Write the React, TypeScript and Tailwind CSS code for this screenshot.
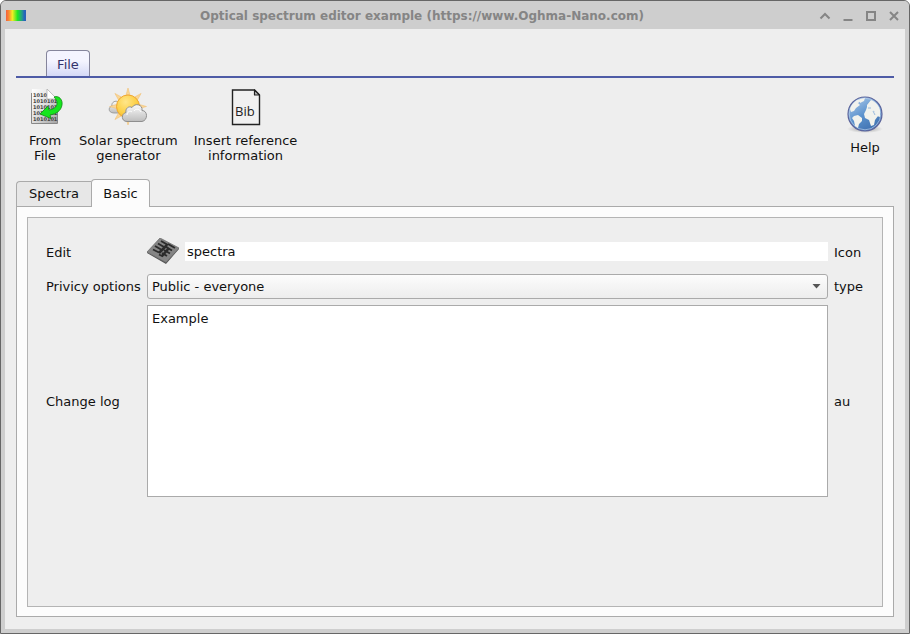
import React from "react";

function SpectrumLogo() {
  return (
    <svg width="20" height="11" viewBox="0 0 20 11" aria-hidden="true">
      <defs>
        <linearGradient id="rainbow" x1="0" x2="1" y1="0" y2="0">
          <stop offset="0" stopColor="#f4603c" />
          <stop offset="0.15" stopColor="#f98c35" />
          <stop offset="0.32" stopColor="#f2ee22" />
          <stop offset="0.58" stopColor="#1fe626" />
          <stop offset="0.8" stopColor="#259a8a" />
          <stop offset="0.92" stopColor="#2565bd" />
          <stop offset="1" stopColor="#2b62b5" />
        </linearGradient>
      </defs>
      <rect width="20" height="11" fill="url(#rainbow)" />
    </svg>
  );
}

const binaryRows = ["1010", "1010101", "1010101", "1010101", "1010101"];

function FromFileIcon() {
  return (
    <svg width="36" height="38" viewBox="0 0 36 38" aria-hidden="true">
      <defs>
        <linearGradient id="sheet" x1="0" x2="1" y1="0" y2="1">
          <stop offset="0" stopColor="#ffffff" />
          <stop offset="0.5" stopColor="#dedede" />
          <stop offset="1" stopColor="#a4a4a4" />
        </linearGradient>
      </defs>
      <path d="M5 1h16l9 10v24H5z" fill="url(#sheet)" />
      <path d="M4.500 5v30.500h26V16" fill="none" stroke="#888" />
      <g fontFamily="'DejaVu Sans', sans-serif" fontSize="5" fontWeight="700" fill="#444">
        {binaryRows.map((row, i) => (
          <text key={i} x="6" y={9 + i * 6}>
            {row}
          </text>
        ))}
      </g>
      <path d="M20 1l10 10H20z" fill="#fff" stroke="#aaa" strokeWidth="0.700" />
      <path
        d="M27 9c5-2 9 3 8 8-1 6-6 9-12 10l1 3.500-11-4.500 8-8 1 4c5-1 8-3 8-7 0-2-1-4-3-6z"
        fill="#16e51d"
        stroke="#128a17"
        strokeWidth="0.800"
        strokeLinejoin="round"
      />
    </svg>
  );
}

function SunIcon() {
  return (
    <svg width="40" height="38" viewBox="0 0 40 38" aria-hidden="true">
      <defs>
        <radialGradient id="sun" cx="0.4" cy="0.3" r="0.8">
          <stop offset="0" stopColor="#ffe68a" />
          <stop offset="0.6" stopColor="#fccf45" />
          <stop offset="1" stopColor="#f5ae28" />
        </radialGradient>
        <linearGradient id="cloud" x1="0" x2="0" y1="0" y2="1">
          <stop offset="0" stopColor="#fbfbfb" />
          <stop offset="1" stopColor="#bdbdbd" />
        </linearGradient>
      </defs>
      <path
        d="M6 25c-6 0-6-6-2-7-1-4 4-6 6-4 4-1 6 3 5 5 2 3 0 6-3 6z"
        fill="url(#cloud)"
        stroke="#999"
        strokeWidth="0.900"
      />
      <g fill="#f9d698" stroke="#f2bd68" strokeWidth="0.500">
        {[0, 45, 90, 135, 180, 225, 270, 315].map((angle) => (
          <path key={angle} d="M18 7L20 0l2 7z" transform={`rotate(${angle} 20 18.500)`} />
        ))}
      </g>
      <circle cx="20" cy="18.500" r="11.500" fill="url(#sun)" stroke="#efa733" />
      <path
        d="M19 33.500c-6 0-6-8-1-9-1-4 3-7 6-5 3-5 11-3 10 3 6 0 6 10 0 11z"
        fill="url(#cloud)"
        stroke="#8f8f8f"
      />
      <path d="M19 27c0-3 3-5 5-3m2-1c2-3 6-2 7 1" fill="none" stroke="#fff" />
    </svg>
  );
}

function BibIcon() {
  return (
    <svg width="30" height="38" viewBox="0 0 30 38" aria-hidden="true">
      <path d="M1.500 2h22l5 5v29.500h-27z" fill="#f1f1f1" stroke="#222" strokeWidth="1.400" />
      <path d="M23.500 2v5h5z" fill="#bbb" stroke="#222" strokeWidth="1.200" strokeLinejoin="round" />
      <text x="4" y="28" fontFamily="'Open Sans', sans-serif" fontSize="13" fill="#222">
        Bib
      </text>
    </svg>
  );
}

function GlobeIcon() {
  return (
    <svg width="38" height="38" viewBox="0 0 38 38" aria-hidden="true">
      <defs>
        <linearGradient id="ocean" x1="0.2" x2="0.8" y1="0" y2="1">
          <stop offset="0" stopColor="#a9c7e8" />
          <stop offset="0.5" stopColor="#5b92cd" />
          <stop offset="1" stopColor="#3c6cac" />
        </linearGradient>
        <radialGradient id="shade">
          <stop offset="0" stopColor="#555" stopOpacity="0.6" />
          <stop offset="1" stopColor="#777" stopOpacity="0" />
        </radialGradient>
      </defs>
      <ellipse cx="19" cy="34" rx="18" ry="4" fill="url(#shade)" />
      <circle cx="19" cy="19" r="17" fill="url(#ocean)" stroke="#5d659c" strokeWidth="1.200" />
      <circle cx="19" cy="19" r="15.800" fill="none" stroke="#b9cfea" strokeWidth="0.700" />
      <g fill="#f1f2ed">
        <path d="M4 14c1-4 4-7 7-9l4-1 0 2-3 2 2 2-4 3-2 3-3 1z" />
        <path d="M14 4l5-1-1 3-4 2z" />
        <path d="M8 21l4-1 4 3 0 3-3 3-1 4-3-2-1-5-2-3z" />
        <path d="M21 10l4-5c5 2 8 6 9 10l0 7-3-1-3-5-4-1-4 0 1-3z" />
        <path d="M20 15l6-1 3 3 3 4-3 4-1 5-3 1-2-6-4-2-1-4z" />
      </g>
      <path d="M22 13l3 0m2 3l2 4" stroke="#83abd8" strokeWidth="0.800" fill="none" />
    </svg>
  );
}

function ChipIcon() {
  return (
    <svg width="32" height="28" viewBox="0 0 32 28" aria-hidden="true">
      <path d="M0 14l19 10 13-14v1L19 26 0 15z" fill="#555" />
      <path d="M13 0l19 10-13 14.500L0 14z" fill="#858585" stroke="#666" strokeWidth="0.700" />
      <g stroke="#2b2b2b" strokeWidth="1.900" fill="none">
        <path d="M20 7l-8 8" strokeWidth="2.500" />
        <path d="M22 10l-7 8" strokeWidth="2.500" />
        <path d="M14 3l7 4m-10-1.500l6 3.500m-9-1l6 3.500m-8 0l6 3" />
        <path d="M21 6l7 4m-9-1l6 3.500m-8-.500l6 3.500m-8-.500l5 3m-8-1.500l4 2" />
      </g>
    </svg>
  );
}

const windowControls = [
  { label: "Shade", path: "M2.500 9.500L7 5l4.500 4.500" },
  { label: "Minimize", path: "M2.500 11h9" },
  { label: "Maximize", path: "M3 3h8v8H3z" },
  { label: "Close", path: "M3 3l8 8M11 3l-8 8" },
];

function TitleBar() {
  return (
    <header className="flex h-7 items-center bg-[#cecece] pt-px pr-2 pl-[5px]">
      <SpectrumLogo />
      <h1 className="flex-1 text-center text-[12px] leading-4 font-bold text-[#858585]">
        Optical spectrum editor example (https://www.Oghma-Nano.com)
      </h1>
      <div className="flex gap-[9px]">
        {windowControls.map((control) => (
          <button key={control.label} type="button" aria-label={control.label}>
            <svg width="14" height="14" viewBox="0 0 14 14" fill="none" stroke="#858585" strokeWidth="2">
              <path d={control.path} />
            </svg>
          </button>
        ))}
      </div>
    </header>
  );
}

function ToolButton({ icon, children }: { icon: React.ReactNode; children: React.ReactNode }) {
  return (
    <button type="button" className="flex flex-col items-center gap-[7px] text-center leading-[15px]">
      {icon}
      <span>{children}</span>
    </button>
  );
}

export default function App() {
  return (
    <div className="flex h-screen flex-col overflow-hidden rounded-t-md border border-[#666] bg-[#cecece] font-['DejaVu_Sans',sans-serif] text-[13px] leading-4 text-[#111]">
      <TitleBar />
      <main className="mx-1 mb-1 flex flex-1 flex-col bg-[#eeeeee] px-[11px] pt-[21px] pb-3">
        <nav className="flex border-b-2 border-[#4e5ba6] pl-[30px]">
          <button
            type="button"
            className="h-[26px] w-11 rounded-t border border-b-0 border-[#85859c] bg-linear-to-b from-[#f4f4ff] from-40% to-[#d5d9f6] pt-[2px] text-[#33336b]"
          >
            File
          </button>
        </nav>

        <div className="flex items-start justify-between pt-[10px] pr-[10px] pl-[11px]">
          <div className="flex gap-4">
            <ToolButton icon={<FromFileIcon />}>
              From
              <br />
              File
            </ToolButton>
            <ToolButton icon={<SunIcon />}>
              Solar spectrum
              <br />
              generator
            </ToolButton>
            <ToolButton icon={<BibIcon />}>
              Insert reference
              <br />
              information
            </ToolButton>
          </div>
          <div className="pt-[7px]">
            <ToolButton icon={<GlobeIcon />}>Help</ToolButton>
          </div>
        </div>

        <div role="tablist" className="mt-4 flex items-end">
          <button
            type="button"
            role="tab"
            aria-selected="false"
            className="h-[25px] w-[75px] rounded-tl border border-r-0 border-b-0 border-[#aaa] bg-[#e7e7e7]"
          >
            Spectra
          </button>
          <button
            type="button"
            role="tab"
            aria-selected="true"
            className="z-10 -mb-px h-7 w-[59px] rounded-t border border-b-0 border-[#aaa] bg-[#fcfcfc]"
          >
            Basic
          </button>
        </div>

        <section className="flex flex-1 border border-[#aaa] bg-[#fcfcfc] px-[10px] pt-[10px] pb-[9px]">
          <form className="grid flex-1 grid-cols-[95px_1fr_30px] content-start items-center gap-[6px] border border-[#b4b4b4] bg-[#eeeeee] p-[18px]">
            <label htmlFor="name" className="pt-[2px] whitespace-nowrap">
              Edit
            </label>
            <div className="flex h-8 items-center gap-[6px] pb-px">
              <button type="button" aria-label="Change icon">
                <ChipIcon />
              </button>
              <input
                id="name"
                type="text"
                defaultValue="spectra"
                className="h-[19px] min-w-0 flex-1 bg-white px-[2px] outline-none"
              />
            </div>
            <span className="pt-[2px]">Icon</span>

            <label htmlFor="privacy" className="whitespace-nowrap">
              Privicy options
            </label>
            <div className="relative">
              <select
                id="privacy"
                className="block h-[25px] w-full appearance-none rounded-[3px] border border-[#aaa] bg-linear-to-b from-[#fcfcfc] to-[#ededed] px-1 outline-none"
              >
                <option>Public - everyone</option>
              </select>
              <svg
                className="pointer-events-none absolute top-[10px] right-[7px]"
                width="9"
                height="5"
                viewBox="0 0 9 5"
                aria-hidden="true"
              >
                <path d="M0.500 0h8l-4 4.500z" fill="#555" />
              </svg>
            </div>
            <span>type</span>

            <label htmlFor="log" className="pt-[2px]">
              Change log
            </label>
            <textarea
              id="log"
              defaultValue="Example"
              className="block h-48 w-full resize-none border border-[#aaa] bg-white px-1 py-[5px] outline-none"
            />
            <span className="pt-[2px]">au</span>
          </form>
        </section>
      </main>
    </div>
  );
}
